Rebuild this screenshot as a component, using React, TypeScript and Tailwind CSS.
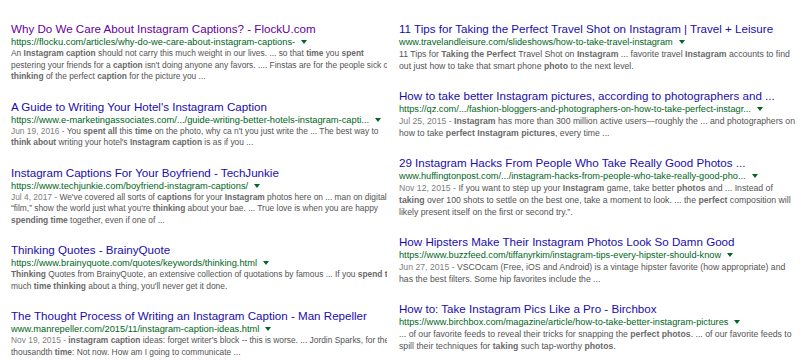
import React from "react";

type Result = {
  title: string;
  url: string;
  visited?: boolean;
  date?: string;
  lines: string[];
};

const left: Result[] = [
  {
    title: "Why Do We Care About Instagram Captions? - FlockU.com",
    url: "https://flocku.com/articles/why-do-we-care-about-instagram-captions-",
    visited: true,
    lines: [
      "An **Instagram caption** should not carry this much weight in our lives. ... so that **time** you **spent**",
      "pestering your friends for a **caption** isn't doing anyone any favors. .... Finstas are for the people sick of",
      "**thinking** of the perfect **caption** for the picture you ...",
    ],
  },
  {
    title: "A Guide to Writing Your Hotel's Instagram Caption",
    url: "https://www.e-marketingassociates.com/.../guide-writing-better-hotels-instagram-capti...",
    date: "Jun 19, 2016",
    lines: [
      "You **spent all** this **time** on the photo, why ca n't you just write the ... The best way to",
      "**think about** writing your hotel's **Instagram caption** is as if you ...",
    ],
  },
  {
    title: "Instagram Captions For Your Boyfriend - TechJunkie",
    url: "https://www.techjunkie.com/boyfriend-instagram-captions/",
    date: "Jul 4, 2017",
    lines: [
      "We've covered all sorts of **captions** for your **Instagram** photos here on ... man on digital",
      "\u201cfilm,\u201d show the world just what you're **thinking** about your bae. ... True love is when you are happy",
      "**spending time** together, even if one of ...",
    ],
  },
  {
    title: "Thinking Quotes - BrainyQuote",
    url: "https://www.brainyquote.com/quotes/keywords/thinking.html",
    lines: [
      "**Thinking** Quotes from BrainyQuote, an extensive collection of quotations by famous ... If you **spend time**",
      "much **time thinking** about a thing, you'll never get it done.",
    ],
  },
  {
    title: "The Thought Process of Writing an Instagram Caption - Man Repeller",
    url: "www.manrepeller.com/2015/11/instagram-caption-ideas.html",
    date: "Nov 19, 2015",
    lines: [
      "**instagram caption** ideas: forget writer's block -- this is worse. ... Jordin Sparks, for the",
      "thousandth **time**: Not now. How am I going to communicate ...",
    ],
  },
];

const right: Result[] = [
  {
    title: "11 Tips for Taking the Perfect Travel Shot on Instagram | Travel + Leisure",
    url: "www.travelandleisure.com/slideshows/how-to-take-travel-instagram",
    lines: [
      "11 Tips for **Taking the Perfect** Travel Shot on **Instagram** ... favorite travel **Instagram** accounts to find",
      "out just how to take that smart phone **photo** to the next level.",
    ],
  },
  {
    title: "How to take better Instagram pictures, according to photographers and ...",
    url: "https://qz.com/.../fashion-bloggers-and-photographers-on-how-to-take-perfect-instagr...",
    date: "Jul 25, 2015",
    lines: [
      "**Instagram** has more than 300 million active users\u2014roughly the ... and photographers on",
      "how to take **perfect Instagram pictures**, every time ...",
    ],
  },
  {
    title: "29 Instagram Hacks From People Who Take Really Good Photos ...",
    url: "www.huffingtonpost.com/.../instagram-hacks-from-people-who-take-really-good-pho...",
    date: "Nov 12, 2015",
    lines: [
      "If you want to step up your **Instagram** game, take better **photos** and ... Instead of",
      "**taking** over 100 shots to settle on the best one, take a moment to look. ... the **perfect** composition will",
      "likely present itself on the first or second try.\u201d.",
    ],
  },
  {
    title: "How Hipsters Make Their Instagram Photos Look So Damn Good",
    url: "https://www.buzzfeed.com/tiffanyrkim/instagram-tips-every-hipster-should-know",
    date: "Jun 27, 2015",
    lines: [
      "VSCOcam (Free, iOS and Android) is a vintage hipster favorite (how appropriate) and",
      "has the best filters. Some hip favorites include the ...",
    ],
  },
  {
    title: "How to: Take Instagram Pics Like a Pro - Birchbox",
    url: "https://www.birchbox.com/magazine/article/how-to-take-better-instagram-pictures",
    lines: [
      "... of our favorite feeds to reveal their tricks for snapping the **perfect photos**. ... of our favorite feeds to",
      "spill their techniques for **taking** such tap-worthy **photos**.",
    ],
  },
];

// splits "**bold**" markers into spans
function Snippet({ text }: { text: string }) {
  const parts = text.split("**");
  return (
    <>
      {parts.map((p, i) =>
        i % 2 === 1 ? (
          <b key={i} className="font-bold text-[#6a6a6a]">
            {p}
          </b>
        ) : (
          <span key={i}>{p}</span>
        )
      )}
    </>
  );
}

type Sizes = { url: string; snip: string };

function Item({ r, s }: { r: Result; s: Sizes }) {
  return (
    <div className="mb-[17px]">
      <div
        className={`text-[11.6px] leading-[14px] whitespace-nowrap ${
          r.visited ? "text-[#660099]" : "text-[#1a0dab]"
        }`}
      >
        {r.title}
      </div>
      <div className={`flex items-center ${s.url} leading-[12px] whitespace-nowrap text-[#006621]`}>
        <span>{r.url}</span>
        <svg width="6" height="4" viewBox="0 0 6 4" className="ml-[6px]">
          <path d="M0 0 L6 0 L3 4 Z" fill="#006621" />
        </svg>
      </div>
      {r.lines.map((line, i) => (
        <div key={i} className={`${s.snip} whitespace-nowrap text-[#545454]`}>
          {i === 0 && r.date && <span className="text-[#808080]">{r.date} - </span>}
          <Snippet text={line} />
        </div>
      ))}
    </div>
  );
}

const leftSizes: Sizes = { url: "text-[9.3px]", snip: "text-[8.4px] leading-[11.5px]" };
const rightSizes: Sizes = { url: "text-[9.2px]", snip: "text-[8.7px] leading-[12px]" };

export default function App() {
  return (
    <div
      className="flex w-[800px] h-[360px] overflow-hidden bg-white"
      style={{ fontFamily: '"Liberation Sans", Arial, sans-serif' }}
    >
      <div className="w-[387px] shrink-0 overflow-hidden pl-[11px] pt-[22px]">
        {left.map((r, i) => (
          <Item key={i} r={r} s={leftSizes} />
        ))}
      </div>
      <div className="flex-1 overflow-hidden pl-[12px] pt-[22px]">
        {right.map((r, i) => (
          <Item key={i} r={r} s={rightSizes} />
        ))}
      </div>
    </div>
  );
}
